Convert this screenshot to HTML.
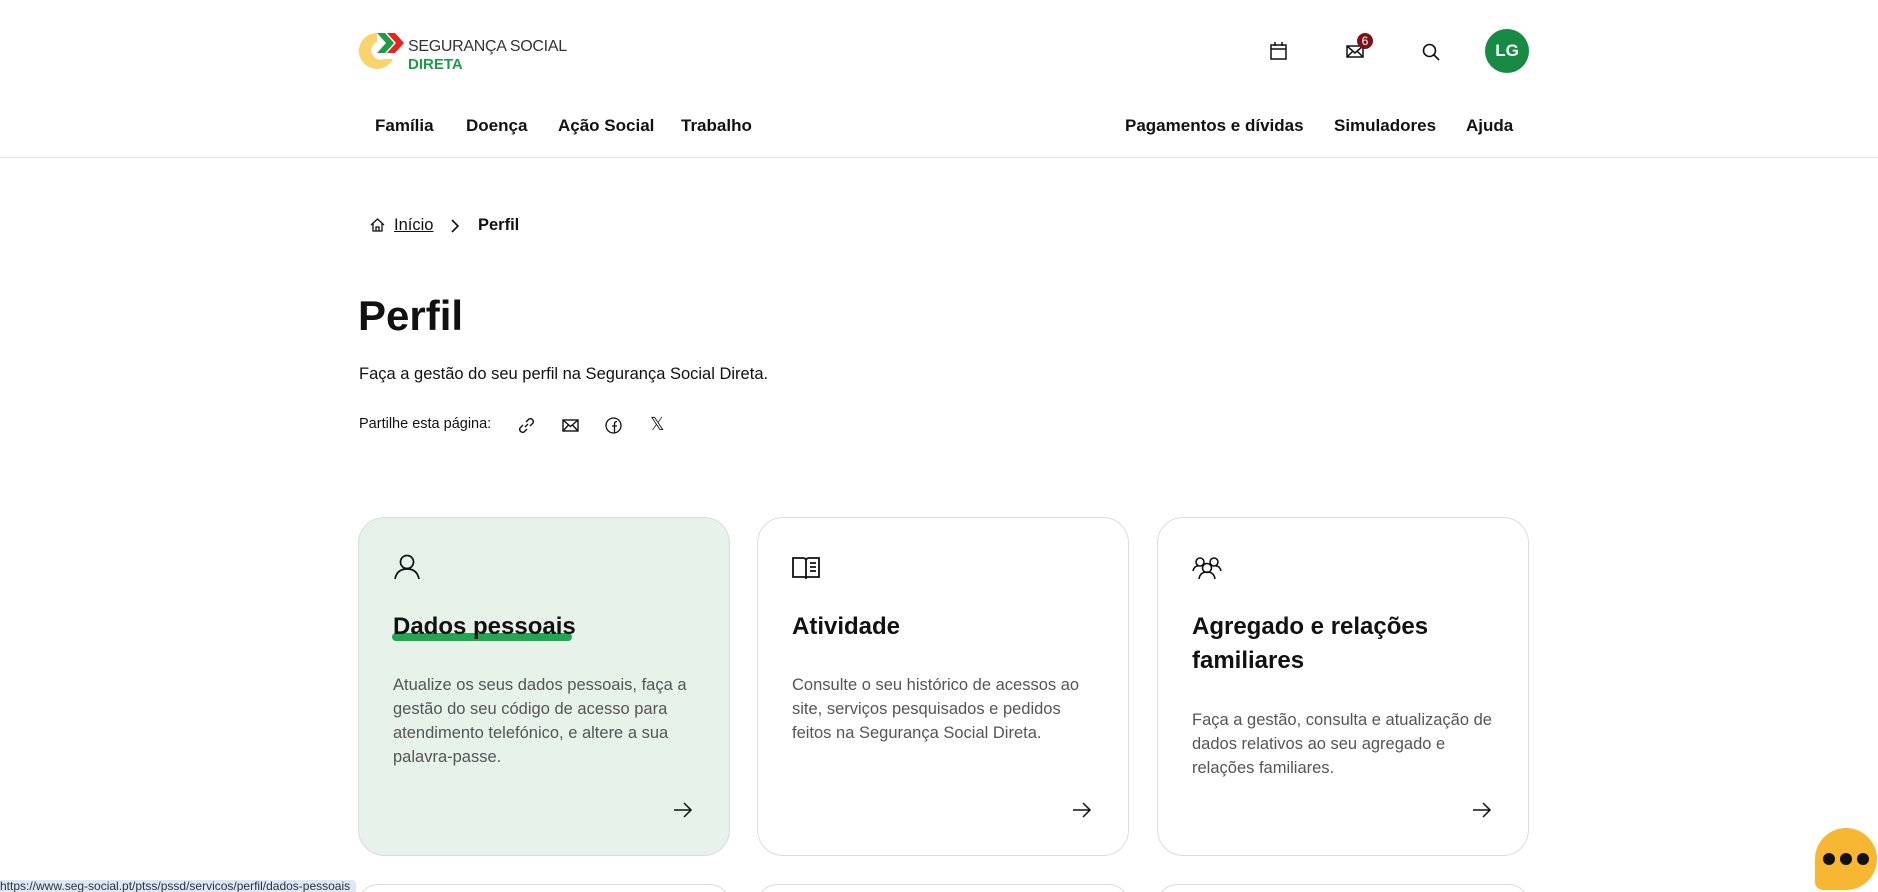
<!DOCTYPE html>
<html><head><meta charset="utf-8"><style>
*{box-sizing:border-box;margin:0;padding:0}
html,body{width:1878px;height:892px;overflow:hidden}
body{background:#fff;font-family:"Liberation Sans",sans-serif;color:#111;position:relative}
.abs{position:absolute}
.nav{font-weight:bold;font-size:17px;top:116px}
.card{position:absolute;top:517px;width:372px;height:339px;border:1px solid #dcdcdc;border-radius:26px;background:#fff}
.card h2{position:absolute;left:34px;font-size:24px;font-weight:bold;line-height:34px;color:#111}
.card p{position:absolute;left:34px;width:292px;font-size:16.5px;line-height:24px;color:#555}
.card .ic{position:absolute;left:34px;top:36px}
.card .ar{position:absolute;left:314px;top:284px}
.card2{position:absolute;top:884px;width:372px;height:20px;border:1px solid #dcdcdc;border-bottom:none;border-radius:26px 26px 0 0;background:#fff}
</style></head><body>
<svg class="abs" style="left:357px;top:29px" width="50" height="44" viewBox="0 0 50 44">
<path d="M20 4 A18 18 0 1 0 36 30 L27 30 A9 9 0 1 1 20 13 Z" fill="#f9d36e"/>
<path d="M20 4 L28 4 L37 14 L28 24 L20 24 L29 14 Z" fill="#1f9a48"/>
<path d="M30 4 L38 4 L47 14 L38 24 L30 24 L39 14 Z" fill="#e52520"/>
</svg>
<div class="abs" style="left:408px;top:38px;font-size:16px;color:#333;letter-spacing:-0.3px">SEGURANÇA SOCIAL</div>
<div class="abs" style="left:408px;top:56px;font-size:15px;font-weight:bold;color:#1f9a48">DIRETA</div>
<svg class="abs" style="left:1270px;top:42px" width="17" height="18" viewBox="0 0 17 18" fill="none" stroke="#111" stroke-width="1.5"><rect x="1" y="3" width="15" height="14"/><line x1="1" y1="7" x2="16" y2="7"/><line x1="5" y1="0" x2="5" y2="4"/><line x1="12" y1="0" x2="12" y2="4"/></svg>
<svg class="abs" style="left:1346px;top:45px" width="18" height="13" viewBox="0 0 18 13" fill="none" stroke="#111" stroke-width="1.5"><rect x="1" y="1" width="16" height="11"/><path d="M1 1 L9 8 L17 1 M1 12 L7 6 M17 12 L11 6"/></svg>
<div class="abs" style="left:1357px;top:33px;width:16px;height:16px;border-radius:50%;background:#7a1118;color:#fff;font-size:12px;text-align:center;line-height:16px">6</div>
<svg class="abs" style="left:1422px;top:43px" width="18" height="18" viewBox="0 0 18 18" fill="none" stroke="#111" stroke-width="1.6"><circle cx="7.5" cy="7.5" r="6"/><line x1="12" y1="12" x2="17" y2="17"/></svg>
<div class="abs" style="left:1485px;top:29px;width:44px;height:44px;border-radius:50%;background:#188a44;color:#fff;font-weight:bold;font-size:17px;text-align:center;line-height:44px">LG</div>
<div class="abs nav" style="left:375px">Família</div>
<div class="abs nav" style="left:466px">Doença</div>
<div class="abs nav" style="left:558px">Ação Social</div>
<div class="abs nav" style="left:681px">Trabalho</div>
<div class="abs nav" style="left:1125px">Pagamentos e dívidas</div>
<div class="abs nav" style="left:1334px">Simuladores</div>
<div class="abs nav" style="left:1466px">Ajuda</div>
<div class="abs" style="left:0;top:157px;width:1878px;height:1px;background:#e6e6e6"></div>
<svg class="abs" style="left:370px;top:218px" width="15" height="14" viewBox="0 0 15 14" fill="none" stroke="#111" stroke-width="1.3"><path d="M1 7 L7.5 1 L14 7 M3 5.5 V13 H12 V5.5 M6 13 V9 H9 V13"/></svg>
<div class="abs" style="left:394px;top:216px;font-size:16.5px;text-decoration:underline">Início</div>
<svg class="abs" style="left:450px;top:219px" width="9" height="14" viewBox="0 0 9 14" fill="none" stroke="#111" stroke-width="1.6"><path d="M2 1 L8 7 L2 13"/></svg>
<div class="abs" style="left:478px;top:216px;font-size:16.5px;font-weight:bold">Perfil</div>
<div class="abs" style="left:358px;top:292px;font-size:42px;font-weight:bold">Perfil</div>
<div class="abs" style="left:359px;top:365px;font-size:16.5px">Faça a gestão do seu perfil na Segurança Social Direta.</div>
<div class="abs" style="left:359px;top:416px;font-size:14.5px">Partilhe esta página:</div>
<svg class="abs" style="left:517px;top:417px" width="19" height="17" viewBox="0 0 19 17" fill="none" stroke="#111" stroke-width="1.4"><path d="M8 10 L11 7 M6 8 L3 11 A3 3 0 0 0 7 15 L10 12 M13 9 L16 6 A3 3 0 0 0 12 2 L9 5"/></svg>
<svg class="abs" style="left:562px;top:419px" width="17" height="13" viewBox="0 0 17 13" fill="none" stroke="#111" stroke-width="1.4"><rect x="1" y="1" width="15" height="11"/><path d="M1 1 L8.5 7.5 L16 1 M1 12 L6.5 6 M16 12 L10.5 6"/></svg>
<svg class="abs" style="left:605px;top:417px" width="17" height="17" viewBox="0 0 17 17" fill="none" stroke="#111" stroke-width="1.3"><circle cx="8.5" cy="8.5" r="7.5"/><path d="M9.5 16 V7 Q9.5 4.5 12 4.5 M7 9 H12"/></svg>
<div class="abs" style="left:650px;top:414px;font-size:18px">𝕏</div>
<div class="card" style="left:358px;background:#e6f2ea">
<svg class="ic" width="28" height="26" viewBox="0 0 28 26" fill="none" stroke="#111" stroke-width="1.7"><circle cx="14" cy="8" r="6.5"/><path d="M2 25 Q4 15 14 15 Q24 15 26 25"/></svg>
<div style="position:absolute;left:33px;top:115px;width:180px;height:8px;border-radius:4px;background:#22a652"></div>
<h2 style="top:92px">Dados pessoais</h2>
<p style="top:155px;width:312px">Atualize os seus dados pessoais, faça a gestão do seu código de acesso para atendimento telefónico, e altere a sua palavra-passe.</p>
<svg class="ar" width="20" height="16" viewBox="0 0 20 16" fill="none" stroke="#111" stroke-width="1.5"><path d="M1 8 H18 M11 1 L18 8 L11 15"/></svg>
</div>
<div class="card" style="left:757px">
<svg class="ic" style="top:38px" width="28" height="24" viewBox="0 0 28 24" fill="none" stroke="#111" stroke-width="1.8"><path d="M1 2 H11 Q14 2 14 5 V21 H1 Z M27 2 H17 Q14 2 14 5 V21 H27 Z M14 21 V23"/><path d="M18 7 H24 M18 11 H24 M18 15 H24"/></svg>
<h2 style="top:92px">Atividade</h2>
<p style="top:155px">Consulte o seu histórico de acessos ao site, serviços pesquisados e pedidos feitos na Segurança Social Direta.</p>
<svg class="ar" width="20" height="16" viewBox="0 0 20 16" fill="none" stroke="#111" stroke-width="1.5"><path d="M1 8 H18 M11 1 L18 8 L11 15"/></svg>
</div>
<div class="card" style="left:1157px">
<svg class="ic" style="top:38px" width="30" height="24" viewBox="0 0 30 24" fill="none" stroke="#111" stroke-width="1.6"><circle cx="8" cy="6" r="4"/><circle cx="22" cy="6" r="4"/><circle cx="15" cy="12" r="4.5"/><path d="M1 15 Q2 10 6 10 M29 15 Q28 10 24 10 M7 23 Q8 16 15 16 Q22 16 23 23"/></svg>
<h2 style="top:92px;width:310px">Agregado e relações familiares</h2>
<p style="top:190px;width:310px">Faça a gestão, consulta e atualização de dados relativos ao seu agregado e relações familiares.</p>
<svg class="ar" width="20" height="16" viewBox="0 0 20 16" fill="none" stroke="#111" stroke-width="1.5"><path d="M1 8 H18 M11 1 L18 8 L11 15"/></svg>
</div>
<div class="card2" style="left:358px"></div>
<div class="card2" style="left:757px"></div>
<div class="card2" style="left:1157px"></div>
<div class="abs" style="left:0;top:880px;width:356px;height:12px;background:#dde7f8;border-radius:0 4px 0 0;font-size:12px;color:#333;line-height:13px;white-space:nowrap;overflow:hidden">https://www.seg-social.pt/ptss/pssd/servicos/perfil/dados-pessoais</div>
<div class="abs" style="left:1815px;top:828px;width:62px;height:62px;border-radius:50% 50% 50% 8px;background:#f7b733"></div>
<div class="abs" style="left:1823px;top:853px;width:12px;height:12px;border-radius:50%;background:#111"></div>
<div class="abs" style="left:1840px;top:853px;width:12px;height:12px;border-radius:50%;background:#111"></div>
<div class="abs" style="left:1857px;top:853px;width:12px;height:12px;border-radius:50%;background:#111"></div>
</body></html>
